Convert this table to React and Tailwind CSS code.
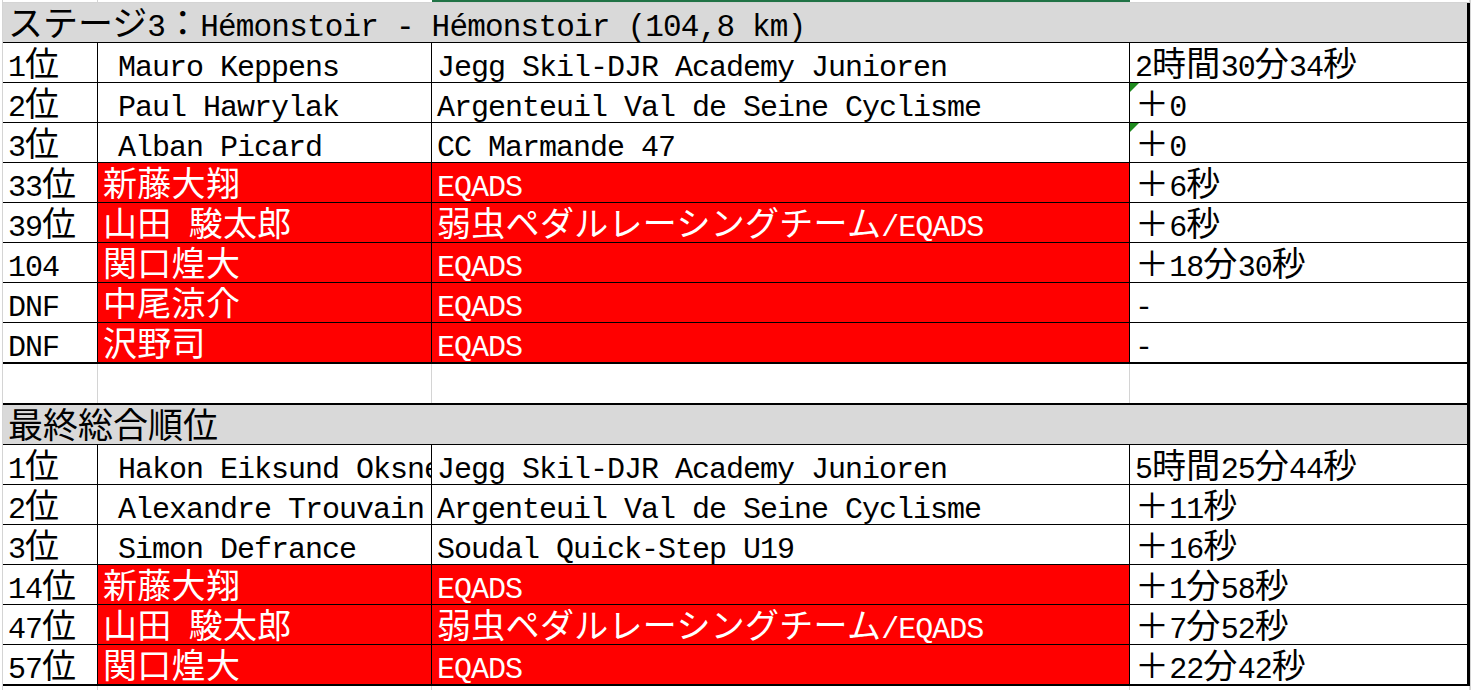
import React from "react";

const CJK = /[\u3000-\u30ff\u3400-\u9fff\uff00-\uffef]/;

function T({ text, big }) {
  const parts = [];
  let cur = "";
  let curC = null;
  for (const ch of text) {
    const c = CJK.test(ch);
    if (curC === null || c === curC) {
      cur += ch;
      curC = c;
    } else {
      parts.push([cur, curC]);
      cur = ch;
      curC = c;
    }
  }
  if (cur) parts.push([cur, curC]);
  return (
    <span className="block mb-[-1px]">
      {parts.map(([s, c], i) =>
        c ? (
          <span
            key={i}
            className={
              big
                ? "font-['Noto_Sans_CJK_JP',sans-serif] text-[35px] tracking-normal"
                : "font-['Noto_Sans_CJK_JP',sans-serif] text-[34px] tracking-[0.3px]"
            }
          >
            {s}
          </span>
        ) : (
          <span key={i}>{s}</span>
        )
      )}
    </span>
  );
}

const GRID = "grid grid-cols-[95px_334px_698px_340px]";
const CELL =
  "flex items-end overflow-hidden whitespace-pre font-['Liberation_Mono',monospace] text-[30px] tracking-[-1px] leading-[30px]";
const TCELL =
  "flex items-end overflow-hidden whitespace-pre font-['Liberation_Mono',monospace] text-[31px] tracking-[-0.8px] leading-[30px]";

const s1 = [
  ["1位", " Mauro Keppens", "Jegg Skil-DJR Academy Junioren", "2時間30分34秒", false, false],
  ["2位", " Paul Hawrylak", "Argenteuil Val de Seine Cyclisme", "＋0", false, true],
  ["3位", " Alban Picard", "CC Marmande 47", "＋0", false, true],
  ["33位", "新藤大翔", "EQADS", "＋6秒", true, false],
  ["39位", "山田 駿太郎", "弱虫ペダルレーシングチーム/EQADS", "＋6秒", true, false],
  ["104", "関口煌大", "EQADS", "＋18分30秒", true, false],
  ["DNF", "中尾涼介", "EQADS", "-", true, false],
  ["DNF", "沢野司", "EQADS", "-", true, false],
];

const s2 = [
  ["1位", " Hakon Eiksund Oksnes", "Jegg Skil-DJR Academy Junioren", "5時間25分44秒", false, false],
  ["2位", " Alexandre Trouvain", "Argenteuil Val de Seine Cyclisme", "＋11秒", false, false],
  ["3位", " Simon Defrance", "Soudal Quick-Step U19", "＋16秒", false, false],
  ["14位", "新藤大翔", "EQADS", "＋1分58秒", true, false],
  ["47位", "山田 駿太郎", "弱虫ペダルレーシングチーム/EQADS", "＋7分52秒", true, false],
  ["57位", "関口煌大", "EQADS", "＋22分42秒", true, false],
];

function DataRow({ r, last }) {
  const [rank, name, team, time, red, flag] = r;
  return (
    <div
      className={
        last
          ? GRID + " h-[41px] border-b-2 border-black"
          : GRID + " h-[40px] border-b border-black"
      }
    >
      <div className={CELL + " pl-[5px] border-r border-black bg-white text-black"}>
        <T text={rank} />
      </div>
      <div
        className={
          red
            ? CELL + " pl-[5px] border-r border-black bg-[#ff0000] text-white"
            : CELL + " pl-[3px] border-r border-black bg-white text-black"
        }
      >
        <T text={name} />
      </div>
      <div
        className={
          red
            ? CELL + " pl-[5px] border-r border-black bg-[#ff0000] text-white"
            : CELL + " pl-[5px] border-r border-black bg-white text-black"
        }
      >
        <T text={team} />
      </div>
      <div className={CELL + " relative pl-[5px] border-r-[3px] border-black bg-white text-black"}>
        {flag && (
          <div className="absolute left-0 top-0 w-0 h-0 border-t-[9px] border-t-[#1e8a1e] border-r-[9px] border-r-transparent" />
        )}
        <T text={time} />
      </div>
    </div>
  );
}

function TitleRow({ text, top }) {
  return (
    <div
      className={
        top
          ? TCELL + " h-[42px] bg-[#d9d9d9] border-t-2 border-b border-r-[3px] border-black pl-[5px] text-black"
          : TCELL + " h-[40px] bg-[#d9d9d9] border-b border-r-[3px] border-black pl-[5px] text-black"
      }
    >
      <T text={text} big />
    </div>
  );
}

export default function App() {
  return (
    <div className="w-[1474px] h-[690px] bg-white overflow-hidden flex">
      <div className="w-[2px] shrink-0" />
      <div className="w-[1468px] shrink-0 border-l border-[#d4d4d4] flex flex-col">
        <div className={GRID + " h-[3px]"}>
          <div className="border-r border-b border-[#d4d4d4]" />
          <div className="border-b border-[#d4d4d4]" />
          <div className="border-t-2 border-t-[#217346] border-b border-b-[#d4d4d4]" />
          <div className="border-b border-r border-[#d4d4d4]" />
        </div>
        <TitleRow text="ステージ3：Hémonstoir - Hémonstoir (104,8 km)" />
        {s1.map((r, i) => (
          <DataRow key={i} r={r} last={i === s1.length - 1} />
        ))}
        <div className={GRID + " h-[39px]"}>
          <div className="border-r border-[#d4d4d4]" />
          <div className="border-r border-[#d4d4d4]" />
          <div className="border-r border-[#d4d4d4]" />
          <div className="border-r-[3px] border-black" />
        </div>
        <TitleRow text="最終総合順位" top />
        {s2.map((r, i) => (
          <DataRow key={i} r={r} last={i === s2.length - 1} />
        ))}
        <div className={GRID + " flex-1"}>
          <div className="border-r border-[#d4d4d4]" />
          <div className="border-r border-[#d4d4d4]" />
          <div className="border-r border-[#d4d4d4]" />
          <div className="border-r border-[#d4d4d4]" />
        </div>
      </div>
      <div className="w-[4px] shrink-0 border-l border-[#d4d4d4]" />
    </div>
  );
}
